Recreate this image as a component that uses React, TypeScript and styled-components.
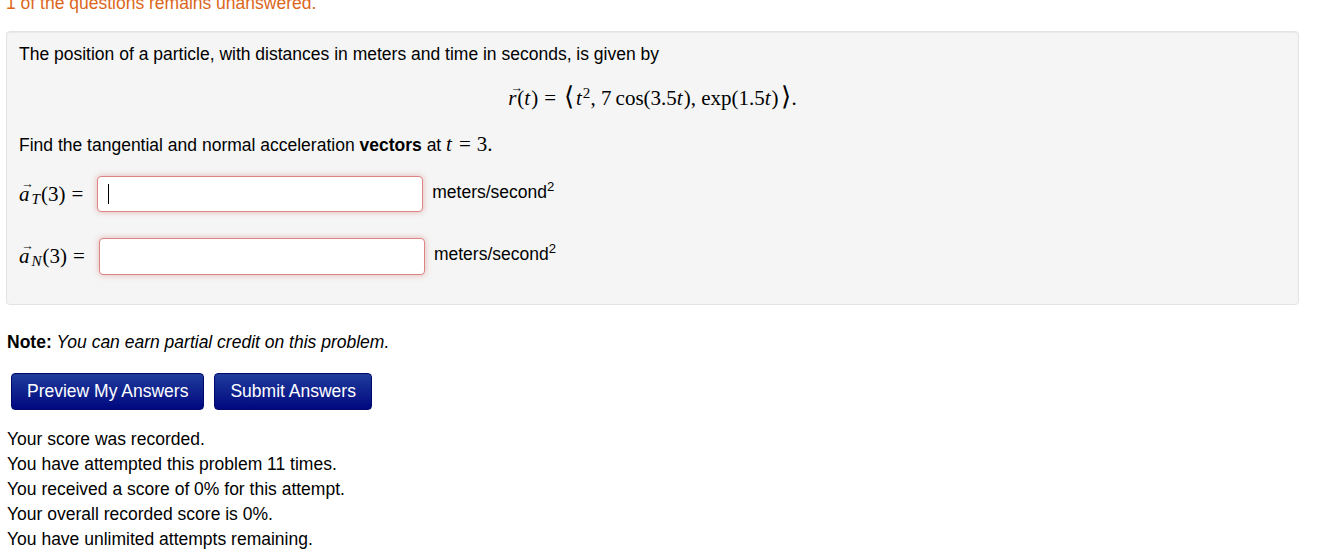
import React from "react";
import styled, { createGlobalStyle } from "styled-components";

const Global = createGlobalStyle`
  html, body { margin: 0; padding: 0; background: #fff; }
  body {
    font-family: "Liberation Sans", Arial, sans-serif;
    font-size: 17.5px;
    line-height: 22px;
    color: #000;
  }
`;

const Page = styled.div`
  padding: 0 22px 0 6px;
  margin-top: -8px;
`;

const Unanswered = styled.div`
  color: #dc671b;
  margin-bottom: 17px;
`;

const Well = styled.div`
  background: #f5f5f5;
  border: 1px solid #e3e3e3;
  border-radius: 4px;
  box-shadow: inset 0 1px 1px rgba(0, 0, 0, 0.05);
  padding: 11px 12px 29px;
`;

const P = styled.p`
  margin: 0;
`;

const Display = styled.div`
  margin: 20px 0 23px;
  height: 26px;
  text-align: center;
  font-family: "Liberation Serif", "Times New Roman", serif;
  font-size: 21px;
  line-height: 26px;
`;

const Math = styled.span`
  font-family: "Liberation Serif", "Times New Roman", serif;
  font-size: 21px;
  line-height: 0;
  white-space: nowrap;
`;

const I = styled.i`
  font-style: italic;
  margin-right: 1px;
`;

const Vec = styled.span`
  position: relative;
  display: inline-block;
  font-style: italic;
  margin-right: 1px;
  line-height: 1;
  &::before {
    content: "\\2192";
    position: absolute;
    font-style: normal;
    font-size: 0.6em;
    left: 0.18em;
    top: -0.45em;
  }
`;

const Sub = styled.span`
  font-style: italic;
  font-size: 0.72em;
  line-height: 0;
  vertical-align: -0.25em;
  margin: 0 1px 0 1px;
`;

const Sup = styled.sup`
  font-size: 0.72em;
  line-height: 0;
  vertical-align: 0.45em;
`;

const Bracket = styled.span<{ $side: "l" | "r" }>`
  font-size: 1.25em;
  line-height: 0;
  margin: ${(p) => (p.$side === "l" ? "0 2px 0 2px" : "0 1px 0 2px")};
`;

const Eq = styled.span`
  margin: 0 6px;
`;

const Row = styled.div<{ $gap: number }>`
  display: flex;
  align-items: flex-start;
  margin-top: ${(p) => p.$gap}px;
`;

const Label = styled.span`
  display: flex;
  align-items: center;
  height: 36px;
  padding-right: 8px;
`;

const InputWrap = styled.div`
  position: relative;
`;

const Field = styled.input<{ $h: number }>`
  display: block;
  box-sizing: border-box;
  width: 326px;
  height: ${(p) => p.$h}px;
  border: 1px solid #dc8583;
  border-radius: 4px;
  background: #fff;
  box-shadow: 0 0 6px rgba(200, 80, 78, 0.38);
  outline: none;
  padding: 4px 10px;
  font: inherit;
`;

const Caret = styled.span`
  position: absolute;
  left: 11px;
  top: 8px;
  width: 1px;
  height: 20px;
  background: #000;
`;

const Unit = styled.span`
  margin-left: 9px;
  line-height: 32px;
`;

const UnitSup = styled.sup`
  font-size: 0.75em;
  line-height: 0;
  vertical-align: 0.5em;
`;

const Note = styled.p`
  margin: 26px 0 0 1px;
`;

const Buttons = styled.div`
  display: flex;
  gap: 10px;
  margin: 20px 0 0 5px;
`;

const Button = styled.button`
  font-family: "Liberation Sans", Arial, sans-serif;
  font-size: 17.5px;
  color: #fff;
  height: 37px;
  padding: 0 15px;
  border: 1px solid #000a6a;
  border-radius: 4px;
  background: linear-gradient(to bottom, #1f3c9c, #00087f);
  cursor: pointer;
`;

const Scores = styled.div`
  margin: 17px 0 0 1px;
  line-height: 25px;
`;

const lines = [
  "Your score was recorded.",
  "You have attempted this problem 11 times.",
  "You received a score of 0% for this attempt.",
  "Your overall recorded score is 0%.",
  "You have unlimited attempts remaining.",
];

function AnswerRow({ sub, gap, h, caret }: { sub: string; gap: number; h: number; caret?: boolean }) {
  return (
    <Row $gap={gap}>
      <Label>
        <Math>
          <Vec>a</Vec>
          <Sub>{sub}</Sub>(3)<Eq>=</Eq>
        </Math>
      </Label>
      <InputWrap>
        <Field type="text" $h={h} />
        {caret && <Caret />}
      </InputWrap>
      <Unit>
        meters/second<UnitSup>2</UnitSup>
      </Unit>
    </Row>
  );
}

export default function App() {
  return (
    <>
      <Global />
      <Page>
        <Unanswered>1 of the questions remains unanswered.</Unanswered>
        <Well>
          <P>
            The position of a particle, with distances in meters and time in seconds, is given by
          </P>
          <Display>
            <Vec>r</Vec>(<I>t</I>)<Eq>=</Eq>
            <Bracket $side="l">⟨</Bracket>
            <I>t</I>
            <Sup>2</Sup>, 7&thinsp;cos(3.5<I>t</I>), exp(1.5<I>t</I>)
            <Bracket $side="r">⟩</Bracket>.
          </Display>
          <P>
            Find the tangential and normal acceleration <b>vectors</b> at{" "}
            <Math>
              <I>t</I>
              <Eq>=</Eq>3.
            </Math>
          </P>
          <AnswerRow sub="T" gap={20} h={36} caret />
          <AnswerRow sub="N" gap={26} h={37} />
        </Well>
        <Note>
          <b>Note:</b> <i>You can earn partial credit on this problem.</i>
        </Note>
        <Buttons>
          <Button>Preview My Answers</Button>
          <Button>Submit Answers</Button>
        </Buttons>
        <Scores>
          {lines.map((l) => (
            <div key={l}>{l}</div>
          ))}
        </Scores>
      </Page>
    </>
  );
}
